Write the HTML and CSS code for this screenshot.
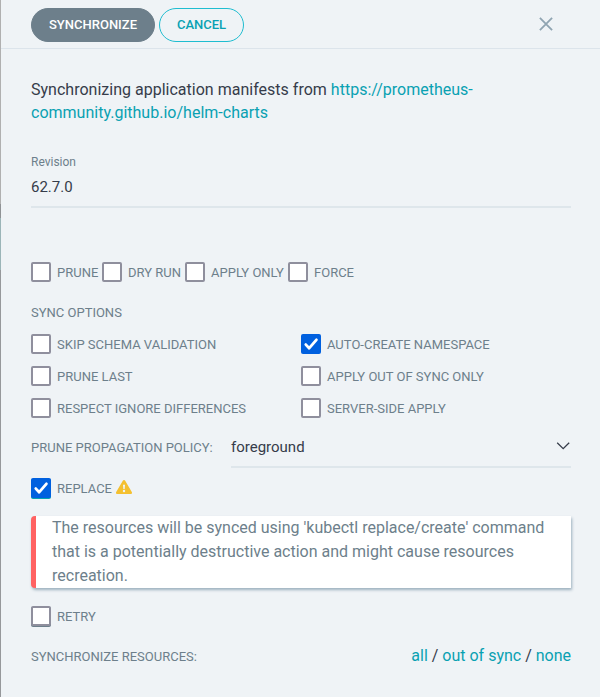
FILE: index.html
```html
<!DOCTYPE html>
<html lang="en">
<head>
<meta charset="utf-8">
<title>Synchronize</title>
<link rel="stylesheet" href="styles.css">
</head>
<body>
<div class="screen">
  <div class="edge"></div>
  <main class="panel">
    <header class="header">
      <button class="button button--solid">Synchronize</button>
      <button class="button button--outline">Cancel</button>
      <svg class="close" viewBox="0 0 14 14"><path d="M.9.9 13.1 13.1M13.1.9.9 13.1"/></svg>
    </header>
    <div class="content">
      <p class="intro">Synchronizing application manifests from <a>https://prometheus-<br>community.github.io/helm-charts</a></p>
      <div class="field">
        <div class="field__label">Revision</div>
        <div class="field__value">62.7.0</div>
      </div>
      <div class="flags">
        <label class="option option--prune"><span class="box"></span>Prune</label>
        <label class="option option--dry"><span class="box"></span>Dry run</label>
        <label class="option option--apply"><span class="box"></span>Apply only</label>
        <label class="option"><span class="box"></span>Force</label>
      </div>
      <div class="caption">Sync options</div>
      <div class="grid">
        <label class="option"><span class="box"></span>Skip schema validation</label>
        <label class="option"><span class="box box--on"><svg viewBox="0 0 20 20"><path d="M4.8 10.6 8.2 14.2 15.4 5.8"/></svg></span>Auto-create namespace</label>
        <label class="option"><span class="box"></span>Prune last</label>
        <label class="option"><span class="box"></span>Apply out of sync only</label>
        <label class="option"><span class="box"></span>Respect ignore differences</label>
        <label class="option"><span class="box"></span>Server-side apply</label>
      </div>
      <div class="policy">
        <span class="policy__label">Prune propagation policy:</span>
        <div class="select">foreground<svg class="chevron" viewBox="0 0 14 8"><path d="M1.2 .8 7.2 6.6 13.2 .8"/></svg></div>
      </div>
      <label class="option option--replace"><span class="box box--on box--on-edge"><svg viewBox="0 0 20 20"><path d="M4.8 10.6 8.2 14.2 15.4 5.8"/></svg></span>Replace
        <svg class="warning" viewBox="0 0 16 14"><path class="warning__body" d="M8 0C8.5 0 9 .3 9.2.7L15.8 12C16.3 12.9 15.8 14 14.7 14H1.3C.2 14-.3 12.9.2 12L6.8.7C7 .3 7.5 0 8 0Z"/><path class="warning__mark" d="M7 4.7H9L8.7 9H7.3Z"/><circle class="warning__mark" cx="8" cy="11" r="1.2"/></svg>
      </label>
      <div class="notice">The resources will be synced using 'kubectl replace/create' command that is a potentially destructive action and might cause resources recreation.</div>
      <label class="option option--retry"><span class="box box--edge"></span>Retry</label>
      <div class="resources">
        <span class="resources__label">Synchronize resources:</span>
        <div class="links"><a>all</a> / <a>out of sync</a> / <a>none</a></div>
      </div>
    </div>
  </main>
</div>
</body>
</html>
```
FILE: styles.css
```css
* { box-sizing: border-box; }
body {
  margin: 0;
  background: #eff3f6;
  color: #363c4a;
  font-family: Roboto, sans-serif;
  font-size: 16px;
}
a { color: #09a1b2; }
.screen { display: flex; height: 697px; overflow: hidden; }
.edge {
  width: 1px;
  flex: none;
  background: linear-gradient(#b0b0b0 204px, #8f9295 204px 218px, #9bb5b8 218px 270px, #96989b 270px);
}
.panel { flex: 1; min-width: 0; }
.header {
  display: flex;
  height: 49px;
  padding: 8px 47px 0 30px;
  border-bottom: 1px solid #dce4eb;
}
.button {
  height: 34px;
  border: 1px solid #6d7f8b;
  border-radius: 17px;
  padding: 0;
  font: 500 13px/32px Roboto, sans-serif;
  text-transform: uppercase;
}
.button--solid { width: 124px; margin-right: 4px; background: #6d7f8b; color: #fff; }
.button--outline { width: 85px; background: transparent; border-color: #1fbdd0; color: #09a1b2; }
.close { width: 14px; height: 14px; margin: 9px 0 0 auto; fill: none; stroke: #8fa4b1; stroke-width: 1.8; }
.content { padding: 29px 29px 0 30px; }
.intro { margin: 0; line-height: 23px; letter-spacing: 0.01px; }
.field {
  height: 65px;
  margin: 19px 0 54px;
  padding-top: 11px;
  border-bottom: 2px solid #dee6eb;
}
.field__label { color: #6d7f8b; font-size: 12px; line-height: 16px; }
.field__value { font-size: 15px; line-height: 20px; margin-top: 7px; }
.option, .caption, .policy__label, .resources {
  color: #6d7f8b;
  font-size: 13px;
  text-transform: uppercase;
}
.flags { display: flex; }
.option { display: flex; align-items: center; height: 20px; white-space: nowrap; }
.option--prune { width: 71px; }
.option--dry { width: 83px; }
.option--apply { width: 103px; }
.box {
  width: 20px;
  height: 20px;
  flex: none;
  margin-right: 6px;
  border: 2px solid #8f8f9d;
  border-radius: 2px;
  background: #fff;
}
.box--on { border: 0; background: #0060df; }
.box--on svg { display: block; width: 20px; height: 20px; fill: none; stroke: #fff; stroke-width: 2.8; stroke-linejoin: round; stroke-linecap: round; }
.box--edge { box-shadow: 0 1px #6d7f8b; }
.box--on-edge { box-shadow: 0 1px #09a1b2; }
.caption { margin-top: 22px; line-height: 18px; }
.grid { display: grid; grid-template-columns: 270px 270px; row-gap: 12px; margin-top: 12px; }
.policy { display: flex; height: 50px; }
.policy__label { width: 200px; line-height: 60px; }
.select {
  flex: 1;
  display: flex;
  justify-content: space-between;
  border-bottom: 2px solid #dee6eb;
  font-size: 15px;
  line-height: 58px;
}
.chevron { width: 14px; height: 8px; margin: 24px 1px 0 0; fill: none; stroke: #363c4a; stroke-width: 1.3; }
.option--replace { margin-top: 10px; }
.warning { width: 16px; height: 14px; margin: -2px 0 0 4px; }
.warning__body { fill: #f4c030; }
.warning__mark { fill: #eff3f6; }
.notice {
  height: 72px;
  margin-top: 18px;
  padding-left: 16px;
  border-left: 5px solid #ff6262;
  border-radius: 4px 0 0 4px;
  background: #fff;
  box-shadow: 1px 2px 3px #9db1be;
  color: #6d7f8b;
  line-height: 24px;
}
.option--retry { margin-top: 18px; }
.resources { display: flex; justify-content: space-between; margin-top: 18px; line-height: 24px; }
.resources__label { padding-top: 1px; }
.links { color: #363c4a; font-size: 16px; text-transform: none; }
```
